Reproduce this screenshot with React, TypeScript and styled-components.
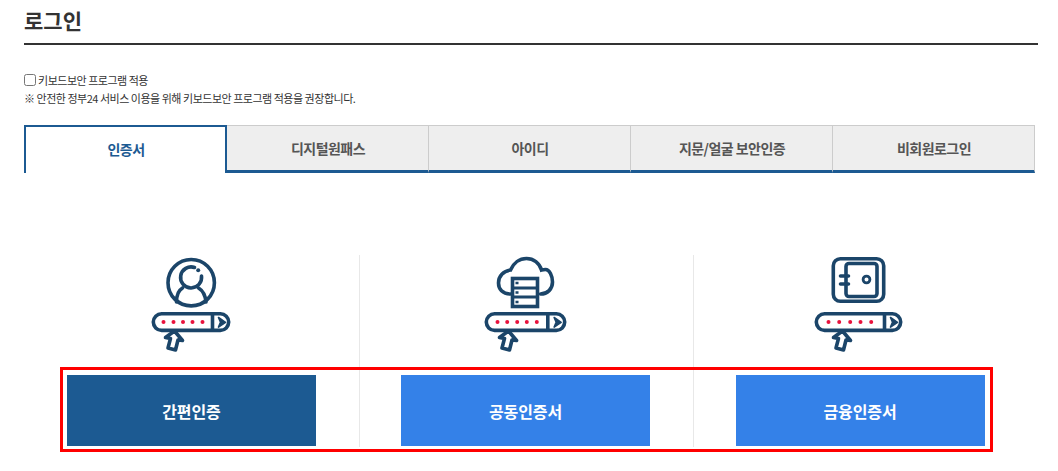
import React from 'react';
import styled, { createGlobalStyle } from 'styled-components';

const GlobalStyle = createGlobalStyle`
  html, body {
    margin: 0;
    padding: 0;
    background: #fff;
    font-family: "Noto Sans CJK KR", "Noto Sans", sans-serif;
  }
`;

const Page = styled.div`
  width: 1058px;
  height: 471px;
  overflow: hidden;
  padding: 0 20px 0 24px;
  box-sizing: border-box;
`;

const Title = styled.h1`
  margin: 0;
  height: 43px;
  border-bottom: 2px solid #333;
  font-size: 21px;
  line-height: 41px;
  font-weight: 700;
  color: #333;
`;

const Notice = styled.div`
  margin-top: 26px;
  font-size: 11px;
  line-height: 18px;
  letter-spacing: -0.48px;
  color: #333;
`;

const CheckRow = styled.label`
  display: flex;
  align-items: center;
  gap: 2px;
`;

const CheckBox = styled.input`
  width: 12px;
  height: 12px;
  margin: 0;
`;

const Tabs = styled.div`
  display: flex;
  height: 48px;
  margin-top: 18px;
`;

const Tab = styled.div<{ $active?: boolean }>`
  flex: 0 0 ${(p) => (p.$active ? 203 : 202)}px;
  box-sizing: border-box;
  display: flex;
  align-items: center;
  justify-content: center;
  padding-left: 1px;
  padding-bottom: ${(p) => (p.$active ? 3 : 0)}px;
  font-size: 14px;
  font-weight: 700;
  letter-spacing: -0.55px;
  color: ${(p) => (p.$active ? '#1c5a92' : '#555')};
  background: ${(p) => (p.$active ? '#fff' : '#eee')};
  border: ${(p) => (p.$active ? '2px solid #1c5a92' : '1px solid #ccc')};
  border-left-width: ${(p) => (p.$active ? 2 : 0)}px;
  border-bottom: ${(p) => (p.$active ? 'none' : '3px solid #1c5a92')};
`;

const Methods = styled.div`
  position: relative;
  display: grid;
  grid-template-columns: 335px 334px 335px;
  width: 1004px;
  margin-top: 82px;
`;

const Method = styled.div<{ $first?: boolean }>`
  box-sizing: border-box;
  height: 192px;
  display: flex;
  flex-direction: column;
  align-items: center;
  padding: 0 43px 1px ${(p) => (p.$first ? 43 : 41)}px;
  border-left: ${(p) => (p.$first ? 'none' : '1px solid #e8e8e8')};
`;

const IconSvg = styled.svg`
  display: block;
  flex: none;
  margin-bottom: 20px;
`;

const LoginButton = styled.button<{ $primary?: boolean }>`
  flex: none;
  width: 249px;
  height: 71px;
  border: none;
  padding: 0;
  font-family: inherit;
  font-size: 16px;
  font-weight: 700;
  letter-spacing: -0.1px;
  color: #fff;
  background: ${(p) => (p.$primary ? '#1c5a92' : '#3481e8')};
`;

const Highlight = styled.div`
  position: absolute;
  left: 36px;
  top: 112px;
  width: 933px;
  height: 85px;
  box-sizing: border-box;
  border: 3px solid #f00;
  pointer-events: none;
`;

const NAVY = '#1b4569';
const RED = '#e9123c';
const STROKE = 3.6;

type FieldProps = { left: number; right: number; divider: number; dots: number[] };

function PasswordField({ left, right, divider, dots }: FieldProps) {
  const mid = (divider + right) / 2;
  return (
    <g>
      <rect
        x={left + 1.8}
        y="68.8"
        width={right - left - 3.6}
        height="16.6"
        rx="8.3"
        fill="#fff"
        stroke={NAVY}
        strokeWidth={STROKE}
      />
      <path d={`M${divider} 69v16`} stroke={NAVY} strokeWidth={STROKE} />
      <path
        d={`M${mid - 3} 72.5l7 4.8-7 4.8 2-4.8z`}
        fill={NAVY}
        stroke={NAVY}
        strokeWidth="1.6"
        strokeLinejoin="round"
      />
      {dots.map((x) => (
        <circle key={x} cx={x} cy="77" r="2" fill={RED} />
      ))}
      <path
        d="M44 86L52 95.5 47.5 95 45 105 37.5 103 40 93.5 35 92.5Z"
        fill="#fff"
        stroke={NAVY}
        strokeWidth={STROKE}
        strokeLinejoin="round"
      />
    </g>
  );
}

function PersonIcon() {
  return (
    <IconSvg width="120" height="100" viewBox="1.5 10 120 100" fill="none">
      <circle cx="60.7" cy="37.7" r="23.2" stroke={NAVY} strokeWidth={STROKE} />
      <path d="M64 22.5A10.5 10.5 0 1 0 71 31" stroke={NAVY} strokeWidth={STROKE} strokeLinecap="round" />
      <path
        d="M52 43C47 46 46 52 46 57M68 43C73 46 75 52 75.5 57"
        stroke={NAVY}
        strokeWidth={STROKE}
        strokeLinecap="round"
      />
      <circle cx="67.7" cy="25.3" r="2" fill={NAVY} />
      <PasswordField left={21} right={100} divider={82} dots={[33, 43, 52.5, 62, 72]} />
    </IconSvg>
  );
}

function CloudIcon() {
  return (
    <IconSvg width="120" height="100" viewBox="1.5 10 120 100" fill="none">
      <path
        d="M46 49C38 49 34 44 34 38 34 31 39 26 46 25 49 18 55 13.5 62 13.5 69 13.5 75 18 77 25 79 24.5 80 24.5 81 24.5 85 24.5 88 31 88 37 88 44 83 49 76 49"
        stroke={NAVY}
        strokeWidth={STROKE}
        strokeLinecap="round"
      />
      <rect x="48" y="33.5" width="25" height="28" fill="#fff" stroke={NAVY} strokeWidth={STROKE} />
      <path d="M48 43h25M48 52h25" stroke={NAVY} strokeWidth="2.8" />
      <path d="M51 38h3M51 47.5h3M51 57h3" stroke={NAVY} strokeWidth="2.4" />
      <PasswordField left={20} right={102} divider={83.3} dots={[33, 42.7, 52.7, 62.3, 72.3]} />
    </IconSvg>
  );
}

function SafeIcon() {
  return (
    <IconSvg width="120" height="100" viewBox="1.5 10 120 100" fill="none">
      <rect x="34.8" y="13.8" width="50.4" height="42.4" rx="7" stroke={NAVY} strokeWidth={STROKE} />
      <rect x="47.5" y="18.5" width="31" height="33" rx="3" stroke={NAVY} strokeWidth={STROKE} />
      <path d="M42 31h8M42 39h8" stroke={NAVY} strokeWidth={STROKE} strokeLinecap="round" />
      <circle cx="68" cy="34.5" r="3.4" stroke={NAVY} strokeWidth="2.8" />
      <PasswordField left={16} right={104} divider={86} dots={[30, 40.7, 51.7, 62, 72.7]} />
    </IconSvg>
  );
}

const tabs = ['인증서', '디지털원패스', '아이디', '지문/얼굴 보안인증', '비회원로그인'];

export default function App() {
  return (
    <Page>
      <GlobalStyle />
      <Title>로그인</Title>
      <Notice>
        <CheckRow>
          <CheckBox type="checkbox" />
          키보드보안 프로그램 적용
        </CheckRow>
        ※ 안전한 정부24 서비스 이용을 위해 키보드보안 프로그램 적용을 권장합니다.
      </Notice>
      <Tabs>
        {tabs.map((t, i) => (
          <Tab key={t} $active={i === 0}>
            {t}
          </Tab>
        ))}
      </Tabs>
      <Methods>
        <Method $first>
          <PersonIcon />
          <LoginButton $primary>간편인증</LoginButton>
        </Method>
        <Method>
          <CloudIcon />
          <LoginButton>공동인증서</LoginButton>
        </Method>
        <Method>
          <SafeIcon />
          <LoginButton>금융인증서</LoginButton>
        </Method>
        <Highlight />
      </Methods>
    </Page>
  );
}
